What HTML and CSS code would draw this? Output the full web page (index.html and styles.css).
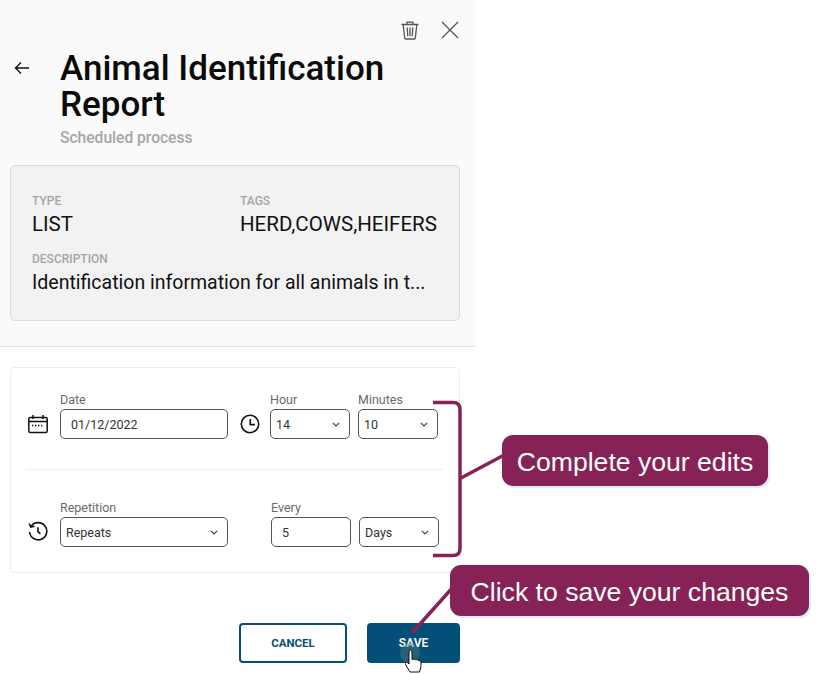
FILE: index.html
```html
<!DOCTYPE html>
<html lang="en">
<head>
<meta charset="utf-8">
<title>Animal Identification Report</title>
<link rel="stylesheet" href="styles.css">
</head>
<body>
<main class="panel">
  <header class="head">
    <div class="tools">
      <svg class="tool" width="20" height="20" viewBox="0 0 20 20" fill="none" stroke="#555" stroke-width="1.3"><path d="M1.500 4.500h17M7 4.300V2.200h6v2.100M3.200 4.800l1.500 13.400q.1.800 1 .8h8.600q.9 0 1-.8l1.500-13.400M7.200 7.500l.6 8.800M10 7.500v8.800M12.800 7.500l-.6 8.800"/></svg>
      <svg class="tool" width="20" height="20" viewBox="0 0 20 20" fill="none" stroke="#555" stroke-width="1.2"><path d="M2 2l16 16M18 2L2 18"/></svg>
    </div>
    <div class="title-row">
      <svg class="back" width="16" height="14" viewBox="0 0 16 14" fill="none" stroke="#111" stroke-width="1.4"><path d="M15 7H1.500M7 1.500L1.500 7 7 12.500"/></svg>
      <div>
        <h1 class="title">Animal Identification Report</h1>
        <p class="subtitle">Scheduled process</p>
      </div>
    </div>
    <section class="summary">
      <div class="summary-row">
        <div class="cell-type"><div class="cap">TYPE</div><div class="val">LIST</div></div>
        <div><div class="cap">TAGS</div><div class="val">HERD,COWS,HEIFERS</div></div>
      </div>
      <div class="cap">DESCRIPTION</div>
      <div class="val desc">Identification information for all animals in t...</div>
    </section>
  </header>

  <section class="form">
    <div class="form-row first">
      <svg class="ficon lead" width="20" height="20" viewBox="0 0 20 20" fill="none" stroke="#111" stroke-width="1.5"><rect x=".8" y="3.500" width="18.400" height="15" rx="1.500"/><path d="M.8 7.500h18.400M5 1v4M15 1v4"/><path d="M4 11.500h12" stroke-dasharray="1.400 1.600"/></svg>
      <label class="field f-date"><span class="lbl">Date</span><span class="box input">01/12/2022</span></label>
      <svg class="ficon clock" width="20" height="20" viewBox="0 0 20 20" fill="none" stroke="#111" stroke-width="1.6"><circle cx="10" cy="10" r="8.700"/><path d="M10.300 5v5.600H15"/></svg>
      <label class="field f-sel"><span class="lbl">Hour</span><span class="box select">14<svg class="chev" width="8" height="5" viewBox="0 0 8 5" fill="none" stroke="#444" stroke-width="1.2"><path d="M.8.8L4 4l3.200-3.200"/></svg></span></label>
      <label class="field f-sel"><span class="lbl">Minutes</span><span class="box select">10<svg class="chev" width="8" height="5" viewBox="0 0 8 5" fill="none" stroke="#444" stroke-width="1.2"><path d="M.8.8L4 4l3.200-3.200"/></svg></span></label>
    </div>
    <hr class="rule">
    <div class="form-row second">
      <svg class="ficon lead" width="20" height="20" viewBox="1 0 20 20" fill="none" stroke="#111" stroke-width="1.6"><path d="M4.200 5.200A8.600 8.600 0 1 1 2.600 11"/><path d="M2.200 2.500l1.600 3.600 3.700-.9"/><path d="M11 6.200v4.400l2.400 2.200"/></svg>
      <label class="field f-date"><span class="lbl">Repetition</span><span class="box select">Repeats<svg class="chev" width="8" height="5" viewBox="0 0 8 5" fill="none" stroke="#444" stroke-width="1.2"><path d="M.8.8L4 4l3.200-3.200"/></svg></span></label>
      <label class="field f-sel f-every"><span class="lbl">Every</span><span class="box input">5</span></label>
      <label class="field f-sel"><span class="lbl">&nbsp;</span><span class="box select">Days<svg class="chev" width="8" height="5" viewBox="0 0 8 5" fill="none" stroke="#444" stroke-width="1.2"><path d="M.8.8L4 4l3.200-3.200"/></svg></span></label>
    </div>
  </section>

  <footer class="actions">
    <button class="btn cancel">CANCEL</button>
    <button class="btn save">SAVE</button>
  </footer>
</main>

<svg class="marks" width="826" height="674" viewBox="0 0 826 674" fill="none">
  <path d="M433 402.500h20q7 0 7 7v139q0 7-7 7h-20" stroke="#862255" stroke-width="3.500"/>
  <path d="M461 478l45-24" stroke="#862255" stroke-width="3.500"/>
  <path d="M412 633l42-47" stroke="#862255" stroke-width="3.500"/>
  <circle cx="410" cy="653" r="10" fill="#4f7a78" fill-opacity=".45"/>
  <path d="M410 672l-4-6.500q-1.500-2.500.5-3 1.300-.3 2.500 1.500v-12q0-2 1.500-2t1.500 2v7.500q2.500-1 3.500.3 2.300-.8 3 .8 2.300-.5 2.500 1.400v4.500l-1.500 5.500z" fill="#fff" stroke="#111" stroke-width="1"/>
</svg>
<div class="callout edits">Complete your edits</div>
<div class="callout changes">Click to save your changes</div>
</body>
</html>
```
FILE: styles.css
```css
* { box-sizing: border-box; }
html, body { margin: 0; padding: 0; background: #fff; overflow: hidden; }
body { width: 826px; height: 674px; position: relative; font-family: Roboto, "Liberation Sans", sans-serif; color: #111; }
.panel { width: 476px; display: flex; flex-direction: column; }
.head { height: 347px; background: #fafafa; border-bottom: 1px solid #e2e2e2; padding: 20px 16px 0 10px; }
.tools { display: flex; justify-content: flex-end; gap: 20px; height: 20px; }
.title-row { display: flex; align-items: flex-start; margin-top: 11px; }
.back { margin: 10px 30px 0 4px; flex: none; }
.title { margin: 0; font-size: 35px; line-height: 36px; font-weight: 500; width: 360px; color: #0b0b0b; }
.subtitle { margin: 5px 0 0; font-size: 15.600px; line-height: 20px; font-weight: 500; color: #a5a5a5; }
.summary { width: 450px; height: 156px; margin-top: 17px; background: #f2f2f2; border: 1px solid #dcdcdc; border-radius: 5px; padding: 28px 21px 0; }
.summary-row { display: flex; margin-bottom: 16px; }
.cell-type { width: 208px; }
.cap { font-size: 12px; line-height: 14px; font-weight: 500; color: #a5a5a5; }
.val { font-size: 20.500px; line-height: 24px; margin-top: 4px; color: #111; white-space: nowrap; }
.val.desc { font-size: 19.500px; margin-top: 5px; }
.form { width: 450px; height: 206px; margin: 20px 0 0 10px; background: #fff; border: 1px solid #ececec; border-radius: 4px; padding: 25px 16px 0 15px; }
.form-row { display: flex; align-items: flex-end; }
.ficon { flex: none; margin-bottom: 5px; }
.ficon.lead { margin-left: 2px; margin-right: 12px; }
.second .ficon.lead { margin-bottom: 6px; }
.ficon.clock { margin: 0 10px 5px 12px; }
.field { display: flex; flex-direction: column; }
.lbl { font-size: 12.500px; line-height: 14px; margin-bottom: 2px; color: #6a6a6a; }
.f-date { width: 168px; }
.f-sel { width: 80px; margin-right: 8px; }
.f-sel:last-child { margin-right: 0; }
.box { height: 30px; border: 1px solid #555; border-radius: 5px; display: flex; align-items: center; justify-content: space-between; font-size: 12.500px; color: #333; background: #fff; }
.input { padding: 0 10px; }
.select { padding: 0 9px 0 5px; }
.chev { flex: none; }
.rule { border: 0; border-top: 1px solid #ececec; margin: 30px 0 0; }
.second { margin-top: 31px; }
.second .f-every { margin-left: 43px; }
.actions { display: flex; justify-content: flex-end; gap: 20px; padding: 50px 16px 0 0; }
.btn { height: 40px; border-radius: 4px; border: 2px solid #034f78; font-family: inherit; font-size: 11.500px; font-weight: 700; padding: 0; }
.cancel { width: 108px; background: #fff; color: #034f78; }
.save { width: 93px; background: #034f78; color: #f4f6f4; font-size: 12px; }
.marks { position: absolute; left: 0; top: 0; pointer-events: none; }
.callout { position: absolute; height: 51px; padding-top: 3px; display: flex; align-items: center; justify-content: center; background: #862255; color: #fff; border-radius: 11px; font-family: "Liberation Sans", Arial, sans-serif; font-size: 26.600px; box-shadow: 2px 2px 0 #dcebfa; white-space: nowrap; }
.edits { left: 502px; top: 435px; width: 266px; }
.changes { left: 450px; top: 565px; width: 359px; }
```
